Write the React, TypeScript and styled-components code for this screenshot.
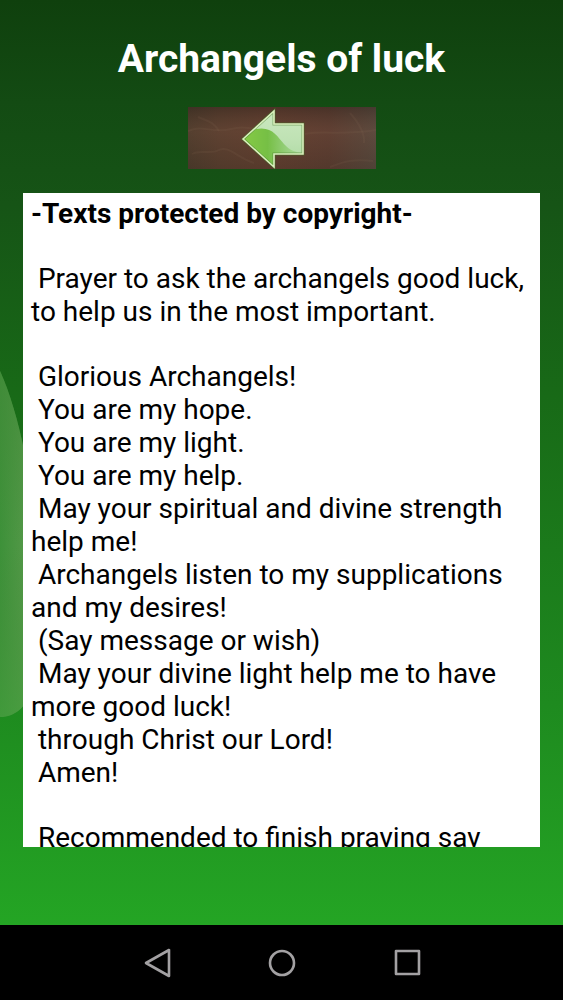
import React from "react";
import styled, { createGlobalStyle } from "styled-components";

const GlobalStyle = createGlobalStyle`
  *, *::before, *::after { box-sizing: border-box; }
  body { margin: 0; background: #000; }
`;

const Screen = styled.div`
  display: flex;
  flex-direction: column;
  height: 100vh;
  font-family: Roboto, "Liberation Sans", sans-serif;
`;

const Page = styled.main`
  position: relative;
  flex: 1;
  min-height: 0;
  display: flex;
  flex-direction: column;
  align-items: center;
  padding: 36px 23px 78px;
  overflow: hidden;
  background: linear-gradient(#0f400d 0%, #134b13 11%, #165416 22%, #186a17 43%, #1e8a1f 76%, #24a524 100%);
`;

const Leaf = styled.svg`
  position: absolute;
  left: 0;
  top: 370px;
  width: 32px;
  height: 348px;
`;

const Title = styled.h1`
  margin: 0 0 25px;
  color: #fff;
  font-size: 39px;
  font-weight: 700;
  line-height: 46px;
  text-align: center;
`;

const BackButton = styled.button`
  flex: none;
  display: block;
  width: 188px;
  height: 62px;
  margin: 0 0 24px;
  padding: 0;
  border: 0;
  cursor: pointer;
  background: none;

  svg { display: block; }
`;

const TextPanel = styled.article`
  position: relative;
  flex: 1;
  align-self: stretch;
  min-height: 0;
  padding: 4px 4px 4px 8px;
  overflow-y: auto;
  scrollbar-width: none;
  background: #fff;
  color: #000;
`;

const Verse = styled.p<{ $strong?: boolean }>`
  margin: 0 0 32px;
  font-size: 28px;
  font-weight: ${(p) => (p.$strong ? 700 : 400)};
  line-height: 33px;
  white-space: pre-wrap;
`;

const NavBar = styled.nav`
  flex: none;
  display: flex;
  justify-content: center;
  align-items: center;
  gap: 85px;
  height: 75px;
  background: #000;
`;

const NavButton = styled.button`
  display: block;
  width: 40px;
  height: 40px;
  padding: 0;
  border: 0;
  background: none;
  cursor: pointer;

  svg {
    display: block;
    fill: none;
    stroke: #a3a1a3;
    stroke-width: 2.6;
    stroke-linejoin: round;
  }
`;

const prayer = [
  " Glorious Archangels!",
  " You are my hope.",
  " You are my light.",
  " You are my help.",
  " May your spiritual and divine strength help me!",
  " Archangels listen to my supplications and my desires!",
  " (Say message or wish)",
  " May your divine light help me to have more good luck!",
  " through Christ our Lord!",
  " Amen!",
].join("\n");

function BackPicture() {
  return (
    <svg width="188" height="62" viewBox="0 0 188 62" aria-hidden="true">
      <defs>
        <linearGradient id="wood" x1="0" y1="0" x2="1" y2="0">
          <stop offset="0" stopColor="#4c3c2c" />
          <stop offset=".16" stopColor="#593f2f" />
          <stop offset=".45" stopColor="#633f30" />
          <stop offset=".75" stopColor="#5c3d31" />
          <stop offset="1" stopColor="#574a3f" />
        </linearGradient>
        <linearGradient id="shade" x1="0" y1="0" x2="0" y2="1">
          <stop offset="0" stopColor="#2b2019" stopOpacity=".4" />
          <stop offset=".4" stopColor="#704a3a" stopOpacity=".25" />
          <stop offset="1" stopColor="#38291e" stopOpacity=".25" />
        </linearGradient>
        <linearGradient id="arrow" x1="0" y1="0" x2="0" y2="1">
          <stop offset="0" stopColor="#cbe8bf" />
          <stop offset=".5" stopColor="#bfe2b4" />
          <stop offset="1" stopColor="#abd9a0" />
        </linearGradient>
        <linearGradient id="gloss" x1="0" y1="0" x2="1" y2="0">
          <stop offset="0" stopColor="#86cb45" />
          <stop offset=".4" stopColor="#76bf45" />
          <stop offset=".7" stopColor="#96cf7c" />
          <stop offset="1" stopColor="#b0dba4" />
        </linearGradient>
        <clipPath id="arrowClip">
          <path d="M55 32 86 4V17H115V47H86V60Z" />
        </clipPath>
      </defs>
      <rect width="188" height="62" fill="url(#wood)" />
      <rect width="188" height="62" fill="url(#shade)" />
      <g fill="none" stroke="#8a6a56" strokeWidth="2" strokeOpacity=".14">
        <path d="M0 24C14 17 25 27 43 22S61 25 72 20" />
        <path d="M4 47C13 42 22 48 31 43S50 51 66 56" />
        <path d="M10 10C19 14 25 14 31 24" />
        <path d="M117 27C138 23 150 29 188 23" />
        <path d="M162 6C170 15 177 26 176 36" />
        <path d="M142 60C157 54 166 52 185 54" />
      </g>
      <path d="M55 32 86 4V17H115V47H86V60Z" fill="url(#arrow)" />
      <g clipPath="url(#arrowClip)">
        <path d="M54 33 68 22C84 19 89 29 96 37S109 45 118 47V62H80Z" fill="url(#gloss)" />
      </g>
      <path d="M55 32 86 4V17H115V47H86V60Z" fill="none" stroke="#3f7926" strokeWidth="3" strokeOpacity=".5" />
      <path d="M55 32 86 4V17H115V47H86V60Z" fill="none" stroke="#d9efbd" strokeWidth="1.6" />
    </svg>
  );
}

export default function App() {
  return (
    <>
      <GlobalStyle />
      <Screen>
        <Page>
          <Leaf viewBox="0 0 32 348" aria-hidden="true">
            <defs>
              <linearGradient id="leaf" x1="0" y1="0" x2="1" y2="0">
                <stop offset="0" stopColor="#3d9139" />
                <stop offset=".75" stopColor="#529847" />
              </linearGradient>
              <linearGradient id="leafFade" x1="0" y1="0" x2="0" y2="1">
                <stop offset="0" stopColor="#438838" stopOpacity=".6" />
                <stop offset=".5" stopColor="#438838" stopOpacity="0" />
                <stop offset="1" stopColor="#43a03c" stopOpacity=".6" />
              </linearGradient>
            </defs>
            <path d="M0 1C10 23 18 51 24 80L32 120V322C25 337 15 347 0 347Z" fill="url(#leaf)" />
            <path d="M0 1C10 23 18 51 24 80L32 120V322C25 337 15 347 0 347Z" fill="url(#leafFade)" />
          </Leaf>
          <Title>Archangels of luck</Title>
          <BackButton type="button" aria-label="Back">
            <BackPicture />
          </BackButton>
          <TextPanel>
            <Verse $strong>-Texts protected by copyright-</Verse>
            <Verse>{" Prayer to ask the archangels good luck, to help us in the most important."}</Verse>
            <Verse>{prayer}</Verse>
            <Verse>{" Recommended to finish praying say"}</Verse>
          </TextPanel>
        </Page>
        <NavBar aria-label="System">
          <NavButton type="button" aria-label="Go back">
            <svg width="40" height="40" viewBox="0 0 40 40">
              <path d="M9 20 32 7V33Z" />
            </svg>
          </NavButton>
          <NavButton type="button" aria-label="Home">
            <svg width="40" height="40" viewBox="0 0 40 40">
              <circle cx="20" cy="20" r="12" />
            </svg>
          </NavButton>
          <NavButton type="button" aria-label="Recent apps">
            <svg width="40" height="40" viewBox="0 0 40 40">
              <rect x="9" y="8" width="23" height="23" />
            </svg>
          </NavButton>
        </NavBar>
      </Screen>
    </>
  );
}
